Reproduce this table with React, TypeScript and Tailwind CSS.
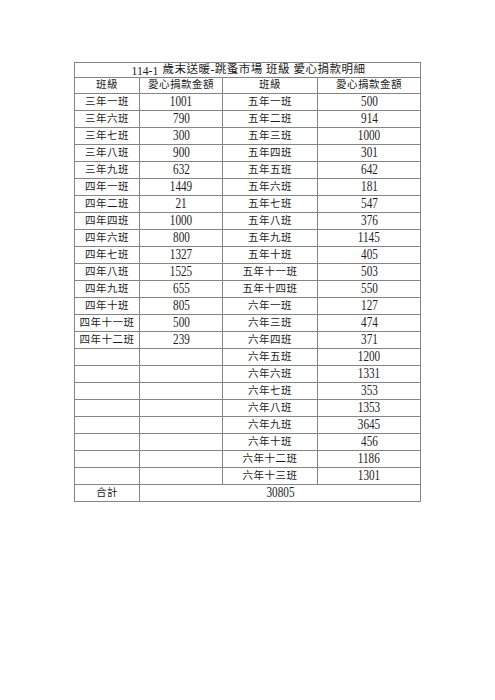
import React from 'react';

type Row = { cls: string; amount: number };

const left: Row[] = [
  { cls: '三年一班', amount: 1001 },
  { cls: '三年六班', amount: 790 },
  { cls: '三年七班', amount: 300 },
  { cls: '三年八班', amount: 900 },
  { cls: '三年九班', amount: 632 },
  { cls: '四年一班', amount: 1449 },
  { cls: '四年二班', amount: 21 },
  { cls: '四年四班', amount: 1000 },
  { cls: '四年六班', amount: 800 },
  { cls: '四年七班', amount: 1327 },
  { cls: '四年八班', amount: 1525 },
  { cls: '四年九班', amount: 655 },
  { cls: '四年十班', amount: 805 },
  { cls: '四年十一班', amount: 500 },
  { cls: '四年十二班', amount: 239 },
];

const right: Row[] = [
  { cls: '五年一班', amount: 500 },
  { cls: '五年二班', amount: 914 },
  { cls: '五年三班', amount: 1000 },
  { cls: '五年四班', amount: 301 },
  { cls: '五年五班', amount: 642 },
  { cls: '五年六班', amount: 181 },
  { cls: '五年七班', amount: 547 },
  { cls: '五年八班', amount: 376 },
  { cls: '五年九班', amount: 1145 },
  { cls: '五年十班', amount: 405 },
  { cls: '五年十一班', amount: 503 },
  { cls: '五年十四班', amount: 550 },
  { cls: '六年一班', amount: 127 },
  { cls: '六年三班', amount: 474 },
  { cls: '六年四班', amount: 371 },
  { cls: '六年五班', amount: 1200 },
  { cls: '六年六班', amount: 1331 },
  { cls: '六年七班', amount: 353 },
  { cls: '六年八班', amount: 1353 },
  { cls: '六年九班', amount: 3645 },
  { cls: '六年十班', amount: 456 },
  { cls: '六年十二班', amount: 1186 },
  { cls: '六年十三班', amount: 1301 },
];

const total = [...left, ...right].reduce((s, r) => s + r.amount, 0);

const Num = ({ v }: { v: number | string }) => (
  <span className="inline-block text-[14px] scale-x-80 leading-none">{v}</span>
);

const Cell = ({ children, className = '' }: { children?: React.ReactNode; className?: string }) => (
  <div className={`bg-white h-[16px] flex items-center justify-center leading-none ${className}`}>{children}</div>
);

const Label = ({ text }: { text: string }) => (
  <span className="text-[10.5px] tracking-[0.5px] leading-none">{text}</span>
);

export default function App() {
  const rows = right.map((r, i) => ({ l: left[i], r }));

  return (
    <div className="min-h-screen bg-white pt-[62px] pl-[74px] text-[#1c1c1c] font-['Liberation_Serif','Noto_Sans_CJK_TC',serif]">
      <div className="grid grid-cols-[64px_82px_94px_102px] gap-px bg-[#858585] border border-[#858585] w-fit">
        <div className="col-span-4 bg-white h-[14px] flex items-center justify-center leading-none">
          <span className="text-[13px] inline-block scale-x-90 mr-[3px]">114-1</span>
          <span className="text-[11.5px] tracking-[0.5px]">歲末送暖-跳蚤市場 班級 愛心捐款明細</span>
        </div>

        <div className="bg-white h-[15px] flex items-center justify-center"><Label text="班級" /></div>
        <div className="bg-white h-[15px] flex items-center justify-center"><Label text="愛心捐款金額" /></div>
        <div className="bg-white h-[15px] flex items-center justify-center"><Label text="班級" /></div>
        <div className="bg-white h-[15px] flex items-center justify-center"><Label text="愛心捐款金額" /></div>

        {rows.map((row, i) => (
          <React.Fragment key={i}>
            <Cell>{row.l && <Label text={row.l.cls} />}</Cell>
            <Cell>{row.l && <Num v={row.l.amount} />}</Cell>
            <Cell><Label text={row.r.cls} /></Cell>
            <Cell><Num v={row.r.amount} /></Cell>
          </React.Fragment>
        ))}

        <Cell><Label text="合計" /></Cell>
        <Cell className="col-span-3"><Num v={total} /></Cell>
      </div>
    </div>
  );
}
